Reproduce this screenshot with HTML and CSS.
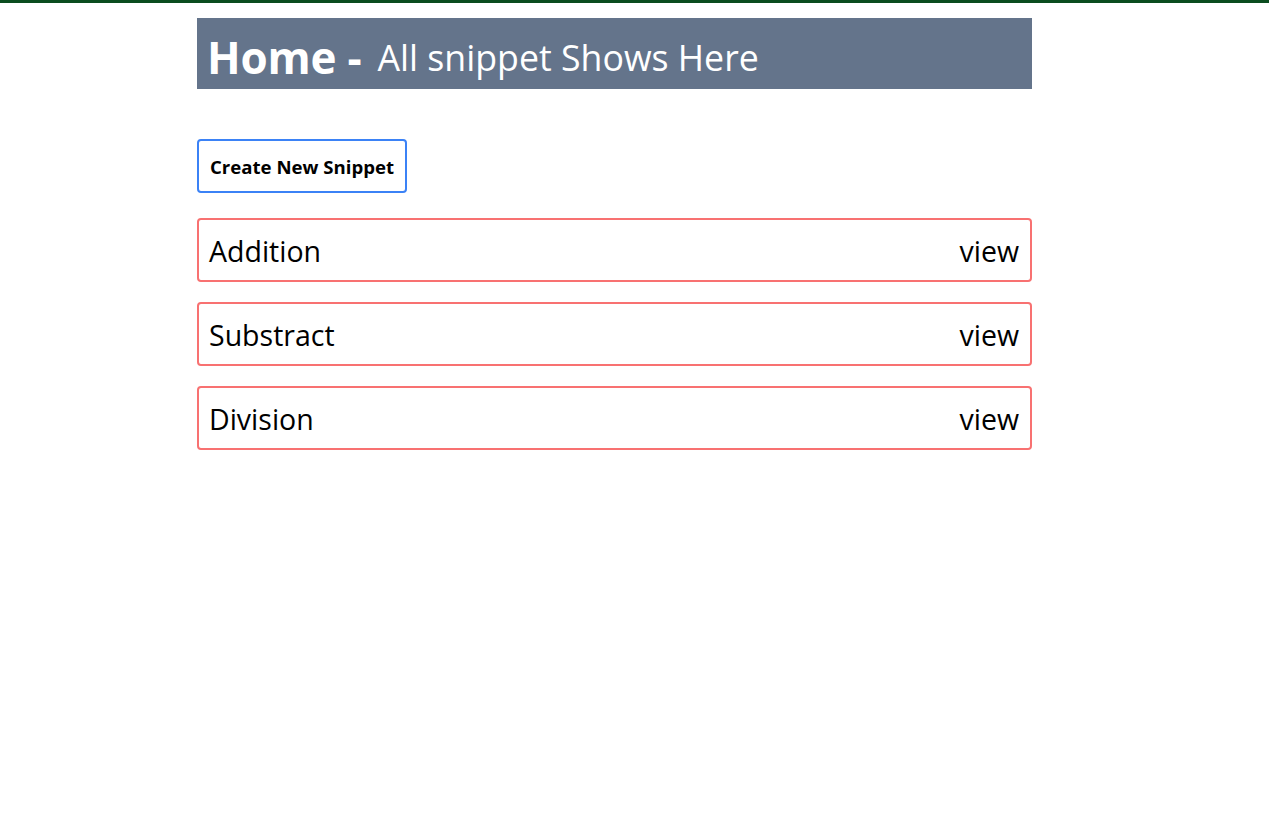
FILE: index.html
```html
<!DOCTYPE html>
<html>
<head>
<meta charset="utf-8">
<link rel="stylesheet" href="styles.css">
</head>
<body>
<div class="topbar"></div>
<main class="container">
  <h1 class="title"><span class="home">Home -</span> All snippet Shows Here</h1>
  <button class="create">Create New Snippet</button>
  <ul class="list">
    <li class="item"><span>Addition</span><a class="view">view</a></li>
    <li class="item"><span>Substract</span><a class="view">view</a></li>
    <li class="item"><span>Division</span><a class="view">view</a></li>
  </ul>
</main>
</body>
</html>
```
FILE: styles.css
```css
html, body { margin: 0; padding: 0; background: #fff; }
body { font-family: "Open Sans", "Noto Sans", sans-serif; color: #000; }
.topbar { height: 3px; background: #0b4d1f; }
.container { width: 835px; margin-left: 197px; padding-top: 15px; }
.title {
  margin: 0;
  height: 71px;
  box-sizing: border-box;
  background: #64748b;
  color: #fff;
  font-weight: 400;
  font-size: 35.7px;
  padding-left: 10px;
  display: flex;
  align-items: center;
  gap: 16px;
  padding-top: 6px;
}
.home { font-weight: 700; font-size: 44px; letter-spacing: -0.2px; }
.create {
  display: block;
  margin-top: 50px;
  height: 54px;
  width: 210px;
  background: #fff;
  border: 2px solid #3b82f6;
  border-radius: 4px;
  font-family: "Open Sans", "Noto Sans", sans-serif;
  font-weight: 700;
  font-size: 18.6px;
  padding: 0;
  color: #000;
}
.list { list-style: none; margin: 25px 0 0; padding: 0; display: flex; flex-direction: column; gap: 20px; }
.item {
  height: 64px;
  box-sizing: border-box;
  border: 2px solid #f87171;
  border-radius: 4px;
  display: flex;
  align-items: center;
  justify-content: space-between;
  padding: 2px 11px 0 10px;
  font-size: 28.5px;
}
.view { color: #000; }
```
